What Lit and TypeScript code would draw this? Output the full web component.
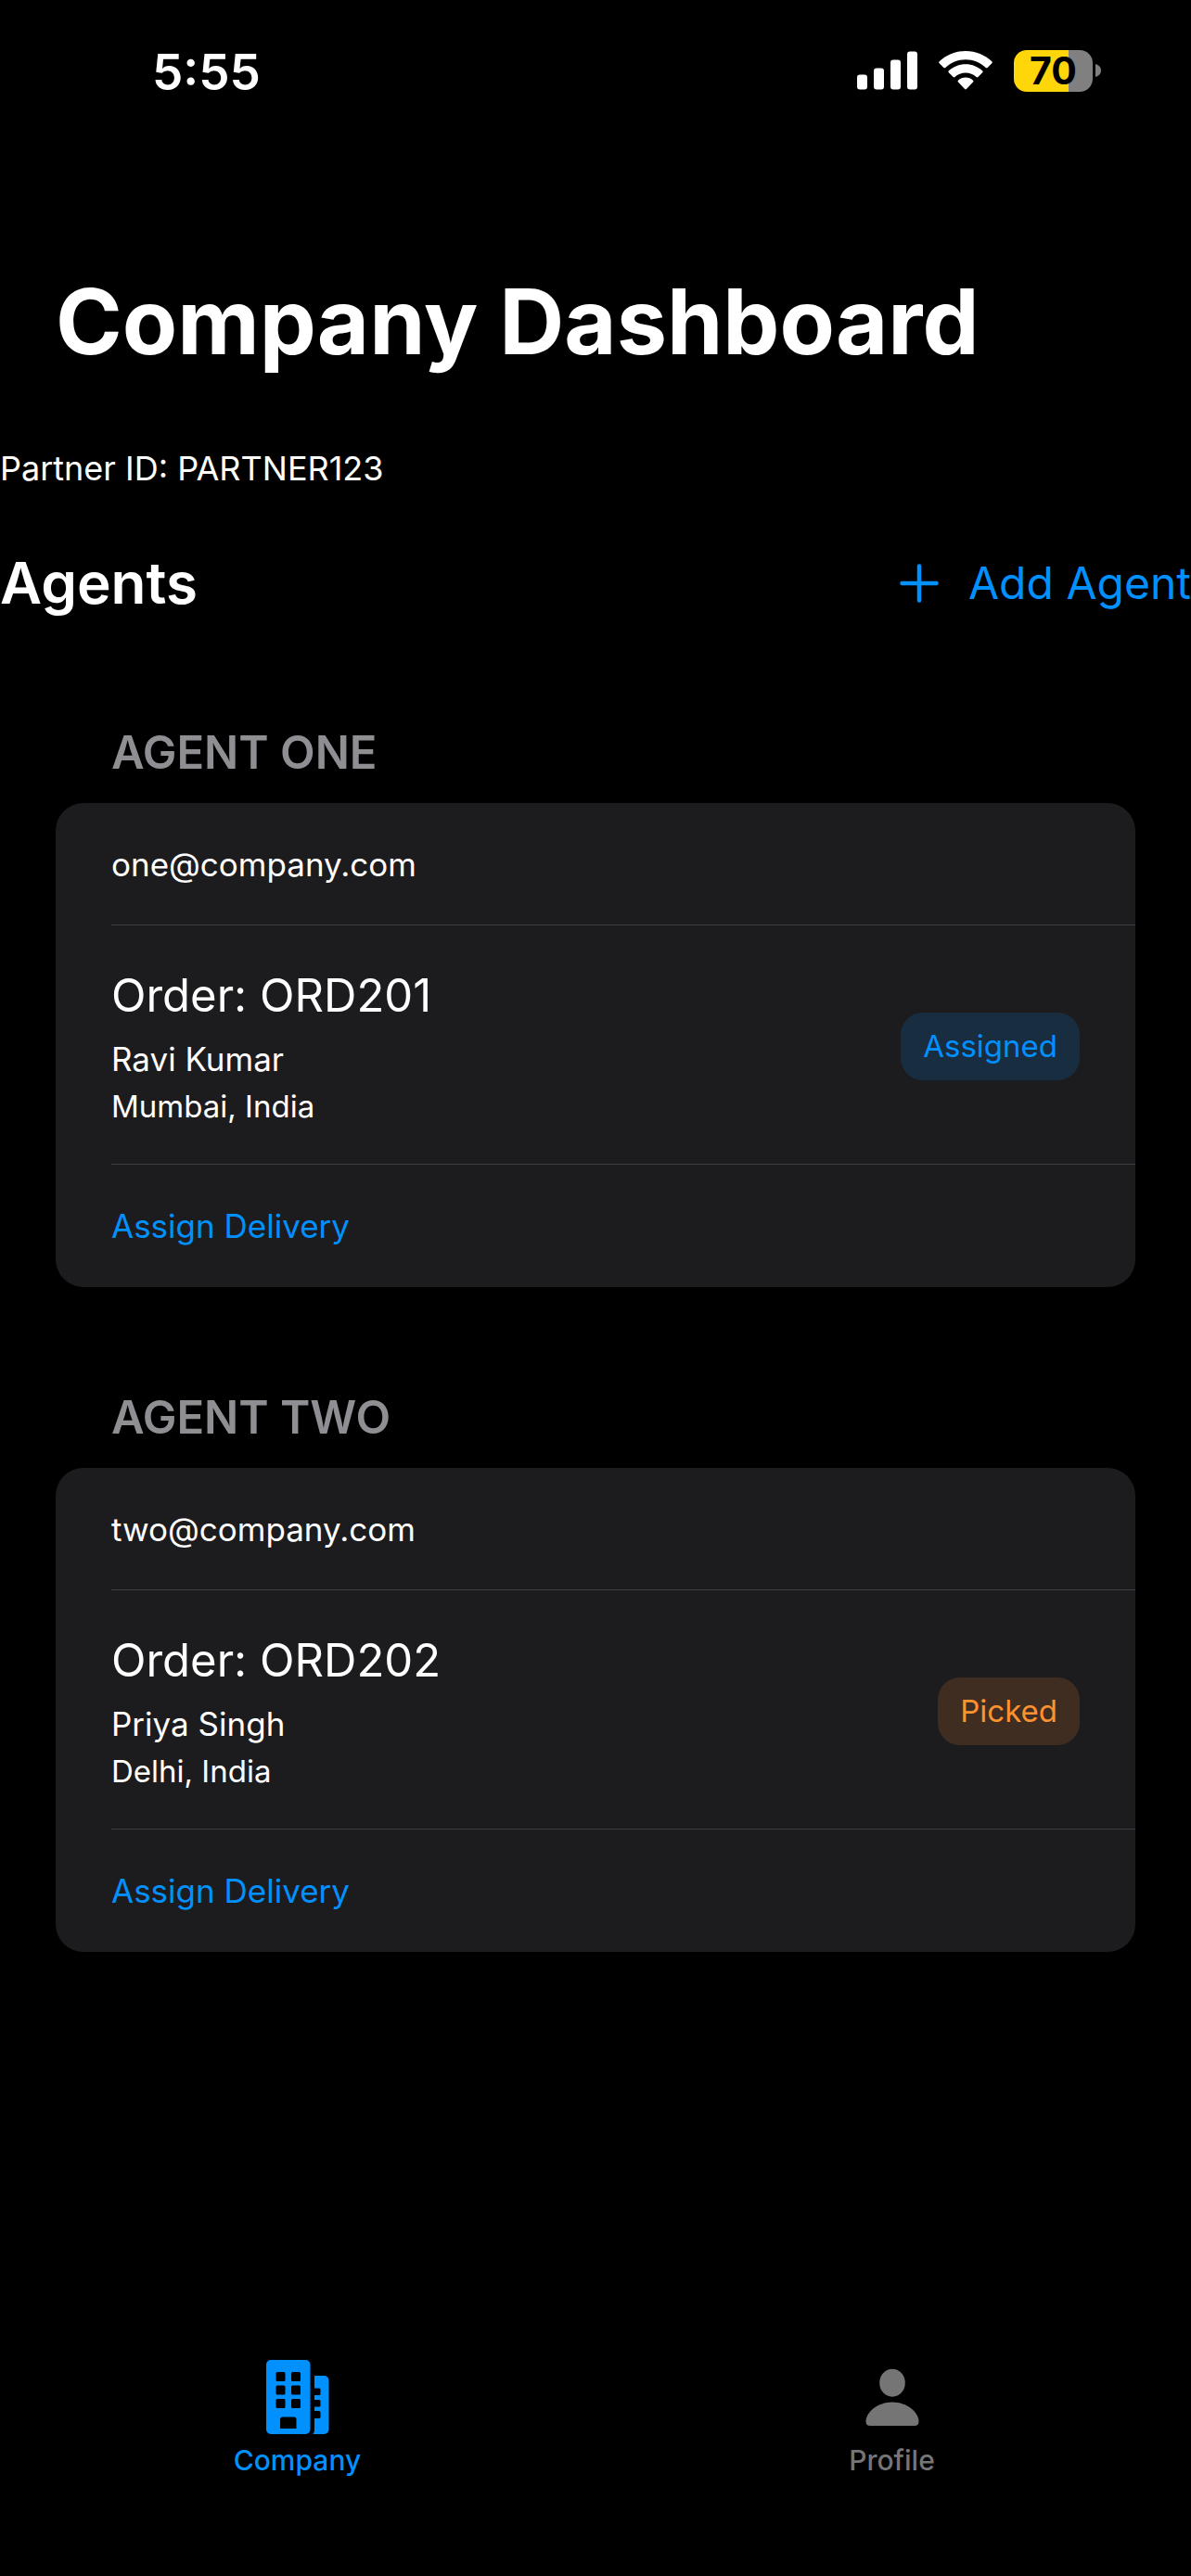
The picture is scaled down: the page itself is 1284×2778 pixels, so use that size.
import { LitElement, html, css, svg } from "lit";
import { customElement, property, state } from "lit/decorators.js";
import { classMap } from "lit/directives/class-map.js";

interface Order {
  id: string;
  customer: string;
  place: string;
  status: "Assigned" | "Picked";
}

interface Agent {
  name: string;
  email: string;
  orders: Order[];
}

const AGENTS: Agent[] = [
  {
    name: "Agent One",
    email: "one@company.com",
    orders: [{ id: "ORD201", customer: "Ravi Kumar", place: "Mumbai, India", status: "Assigned" }],
  },
  {
    name: "Agent Two",
    email: "two@company.com",
    orders: [{ id: "ORD202", customer: "Priya Singh", place: "Delhi, India", status: "Picked" }],
  },
];

@customElement("status-bar")
class StatusBar extends LitElement {
  @property({ type: Number }) battery = 70;

  static styles = css`
    :host {
      display: flex;
      align-items: center;
      justify-content: space-between;
      padding: 44px 97px 38px 164px;
    }
    .time {
      font-size: 53px;
      line-height: 68px;
      font-weight: 600;
    }
    .icons {
      display: flex;
      align-items: center;
      gap: 23px;
      padding-bottom: 4px;
    }
    .icon {
      display: block;
    }
    .battery {
      display: flex;
      align-items: center;
      gap: 3px;
    }
    .cell {
      display: grid;
      place-items: center;
      width: 85px;
      height: 45px;
      border-radius: 14px;
      color: #000;
      font-size: 41px;
      line-height: 45px;
      font-weight: 700;
    }
  `;

  render() {
    const fill = `background: linear-gradient(to right, #ffd60a ${this.battery}%, #808080 ${this.battery}%)`;
    return html`
      <span class="time">5:55</span>
      <div class="icons">
        <svg class="icon" width="65" height="42" viewBox="0 0 65 42" fill="#fff" aria-hidden="true">
          <rect x="0" y="25.5" width="11" height="16" rx="3"></rect>
          <rect x="18" y="18.5" width="11" height="23" rx="3"></rect>
          <rect x="36" y="9.5" width="11" height="32" rx="3"></rect>
          <rect x="54" y="0.5" width="11" height="41" rx="3"></rect>
        </svg>
        <svg class="icon" width="58" height="42" viewBox="0 0 58 42" fill="#fff" aria-hidden="true">
          <path d="M29 0C18 0 8 4.300 .7 11.300a1.300 1.300 0 0 0 0 1.900l4.700 4.700a1.400 1.400 0 0 0 1.900 0C13.100 12.400 20.700 9.200 29 9.200s15.900 3.200 21.700 8.700a1.400 1.400 0 0 0 1.900 0l4.700-4.700a1.300 1.300 0 0 0 0-1.900C50 4.300 40 0 29 0Z"></path>
          <path d="M29 14.200c-7 0-13.400 2.700-18.200 7.100a1.300 1.300 0 0 0 0 1.900l4.800 4.800a1.400 1.400 0 0 0 1.900.1C20.600 25.300 24.600 23.600 29 23.600s8.400 1.700 11.500 4.500a1.400 1.400 0 0 0 1.900-.1l4.800-4.800a1.300 1.300 0 0 0 0-1.900C42.400 16.900 36 14.200 29 14.200Z"></path>
          <path d="M29 28.600c-3.100 0-5.900 1.200-8 3.100a1.200 1.200 0 0 0 0 1.800l7.100 7.600a1.300 1.300 0 0 0 1.800 0l7.100-7.600a1.200 1.200 0 0 0 0-1.800c-2.100-1.900-4.900-3.100-8-3.100Z"></path>
        </svg>
        <div class="battery">
          <span class="cell" style=${fill}>${this.battery}</span>
          <svg class="icon" width="6" height="14" viewBox="0 0 6 14" fill="#808080" aria-hidden="true">
            <path d="M0 0C3.500 1 6 3.600 6 7S3.500 13 0 14Z"></path>
          </svg>
        </div>
      </div>
    `;
  }
}

@customElement("agent-section")
class AgentSection extends LitElement {
  @property({ attribute: false }) agent!: Agent;

  static styles = css`
    :host {
      display: block;
    }
    .name {
      margin: 0 0 24px;
      padding: 0 60px;
      color: #8e8e93;
      font-size: 49px;
      line-height: 60px;
      font-weight: 600;
      text-transform: uppercase;
    }
    .card {
      border-radius: 30px;
      background: #1c1c1e;
      padding: 0 0 1px 60px;
    }
    .row {
      display: flex;
      align-items: center;
      min-height: 131px;
      font-size: 35px;
      line-height: 50px;
    }
    .row + .row {
      border-top: 1px solid #3d3d41;
    }
    .order {
      justify-content: space-between;
      padding: 45px 60px 42px 0;
    }
    .order-id {
      margin: 0 0 12px;
      font-size: 49px;
      line-height: 62px;
      font-weight: 400;
    }
    .customer {
      margin: 0 0 6px;
    }
    .place {
      margin: 0;
      font-size: 33px;
      line-height: 40px;
    }
    .badge {
      padding: 16px 24px 17px;
      border-radius: 24px;
      font-size: 33px;
      line-height: 40px;
    }
    .assigned {
      background: #192d40;
      color: #0091ff;
    }
    .picked {
      background: #3f2d22;
      color: #ff9230;
    }
    .assign {
      flex: 1;
      align-self: stretch;
      padding: 0;
      border: 0;
      background: none;
      color: #0091ff;
      font: inherit;
      text-align: left;
      cursor: pointer;
    }
  `;

  render() {
    const { name, email, orders } = this.agent;
    return html`
      <section>
        <h3 class="name">${name}</h3>
        <div class="card">
          <div class="row">${email}</div>
          ${orders.map(
            (order) => html`
              <div class="row order">
                <div>
                  <h4 class="order-id">Order: ${order.id}</h4>
                  <p class="customer">${order.customer}</p>
                  <p class="place">${order.place}</p>
                </div>
                <span
                  class=${classMap({
                    badge: true,
                    assigned: order.status === "Assigned",
                    picked: order.status === "Picked",
                  })}
                  >${order.status}</span
                >
              </div>
            `
          )}
          <div class="row"><button class="assign" type="button">Assign Delivery</button></div>
        </div>
      </section>
    `;
  }
}

const companyIcon = svg`
  <path fill-rule="evenodd" d="M5 0H42.500a5 5 0 0 1 5 5V75a5 5 0 0 1-5 5H5a5 5 0 0 1-5-5V5a5 5 0 0 1 5-5Z
    M12 13a1.500 1.500 0 0 0-1.500 1.500v7A1.500 1.500 0 0 0 12 23h7a1.500 1.500 0 0 0 1.500-1.500v-7A1.500 1.500 0 0 0 19 13Z
    M28.500 13a1.500 1.500 0 0 0-1.500 1.500v7a1.500 1.500 0 0 0 1.500 1.500h7a1.500 1.500 0 0 0 1.500-1.500v-7a1.500 1.500 0 0 0-1.500-1.500Z
    M12 27.500a1.500 1.500 0 0 0-1.500 1.500v7a1.500 1.500 0 0 0 1.500 1.500h7a1.500 1.500 0 0 0 1.500-1.500v-7a1.500 1.500 0 0 0-1.500-1.500Z
    M28.500 27.500a1.500 1.500 0 0 0-1.500 1.500v7a1.500 1.500 0 0 0 1.500 1.500h7a1.500 1.500 0 0 0 1.500-1.500v-7a1.500 1.500 0 0 0-1.500-1.500Z
    M12 42a1.500 1.500 0 0 0-1.500 1.500v7A1.500 1.500 0 0 0 12 52h7a1.500 1.500 0 0 0 1.500-1.500v-7A1.500 1.500 0 0 0 19 42Z
    M28.500 42a1.500 1.500 0 0 0-1.500 1.500v7a1.500 1.500 0 0 0 1.500 1.500h7a1.500 1.500 0 0 0 1.500-1.500v-7a1.500 1.500 0 0 0-1.500-1.500Z
    M17.500 61.500a2.500 2.500 0 0 0-2.500 2.500V74H32.500V64a2.500 2.500 0 0 0-2.500-2.500Z"></path>
  <path d="M52 17H62.500a5 5 0 0 1 5 5V75a5 5 0 0 1-5 5H50.500C51.500 78.500 52 77 52 75V63H57a1.500 1.500 0 0 0 1.500-1.500v-5A1.500 1.500 0 0 0 57 55H52V50.500H57a1.500 1.500 0 0 0 1.500-1.500V44.500A1.500 1.500 0 0 0 57 43H52V38H57a1.500 1.500 0 0 0 1.500-1.500V32A1.500 1.500 0 0 0 57 30.500H52Z"></path>
`;

const profileIcon = svg`
  <ellipse cx="34" cy="24.700" rx="13.800" ry="15"></ellipse>
  <path d="M34 45.500C50 45.500 62.500 56.500 62.500 66.500C62.500 69.500 60.800 71 58 71H10C7.200 71 5.500 69.500 5.500 66.500C5.500 56.500 18 45.500 34 45.500Z"></path>
`;

const TABS = [
  { id: "company", label: "Company", icon: companyIcon },
  { id: "profile", label: "Profile", icon: profileIcon },
];

@customElement("app-root")
class AppRoot extends LitElement {
  @state() private tab = "company";

  static styles = css`
    :host {
      display: flex;
      flex-direction: column;
      min-height: 100vh;
      background: #000;
      color: #fff;
      font-family: Inter, "Liberation Sans", sans-serif;
    }
    .title {
      margin: 0;
      padding: 135px 60px 0;
      font-size: 97px;
      line-height: 124px;
      font-weight: 700;
    }
    .partner {
      margin: 72px 0 0;
      font-size: 36px;
      line-height: 48px;
    }
    .toolbar {
      display: flex;
      align-items: center;
      justify-content: space-between;
      margin-top: 61px;
    }
    .heading {
      margin: 0;
      font-size: 62px;
      line-height: 78px;
      font-weight: 600;
    }
    .add {
      display: flex;
      align-items: center;
      gap: 32px;
      padding: 0;
      border: 0;
      background: none;
      color: #0091ff;
      font: inherit;
      font-size: 48px;
      line-height: 60px;
      cursor: pointer;
    }
    .agents {
      display: flex;
      flex-direction: column;
      gap: 111px;
      padding: 114px 60px;
    }
    .tabs {
      display: flex;
      margin-top: auto;
      padding: 0 2px 107px 0;
    }
    .tab {
      flex: 1;
      display: flex;
      flex-direction: column;
      align-items: center;
      gap: 10px;
      padding: 0;
      border: 0;
      background: none;
      color: #757575;
      font: inherit;
      font-size: 30px;
      line-height: 36px;
      font-weight: 500;
      cursor: pointer;
    }
    .current {
      color: #0091ff;
    }
  `;

  render() {
    return html`
      <status-bar></status-bar>
      <main>
        <h1 class="title">Company Dashboard</h1>
        <p class="partner">Partner ID: PARTNER123</p>
        <div class="toolbar">
          <h2 class="heading">Agents</h2>
          <button class="add" type="button">
            <svg width="42" height="42" viewBox="0 0 42 42" fill="none" stroke="currentColor" stroke-width="4.500" stroke-linecap="round" aria-hidden="true">
              <path d="M21 2.500V39.500M2.500 21H39.500"></path>
            </svg>
            Add Agent
          </button>
        </div>
        <div class="agents">
          ${AGENTS.map((agent) => html`<agent-section .agent=${agent}></agent-section>`)}
        </div>
      </main>
      <nav class="tabs">
        ${TABS.map(
          (t) => html`
            <button
              type="button"
              class=${classMap({ tab: true, current: this.tab === t.id })}
              @click=${() => (this.tab = t.id)}
            >
              <svg width="68" height="80" viewBox="0 0 68 80" fill="currentColor" aria-hidden="true">${t.icon}</svg>
              ${t.label}
            </button>
          `
        )}
      </nav>
    `;
  }
}
